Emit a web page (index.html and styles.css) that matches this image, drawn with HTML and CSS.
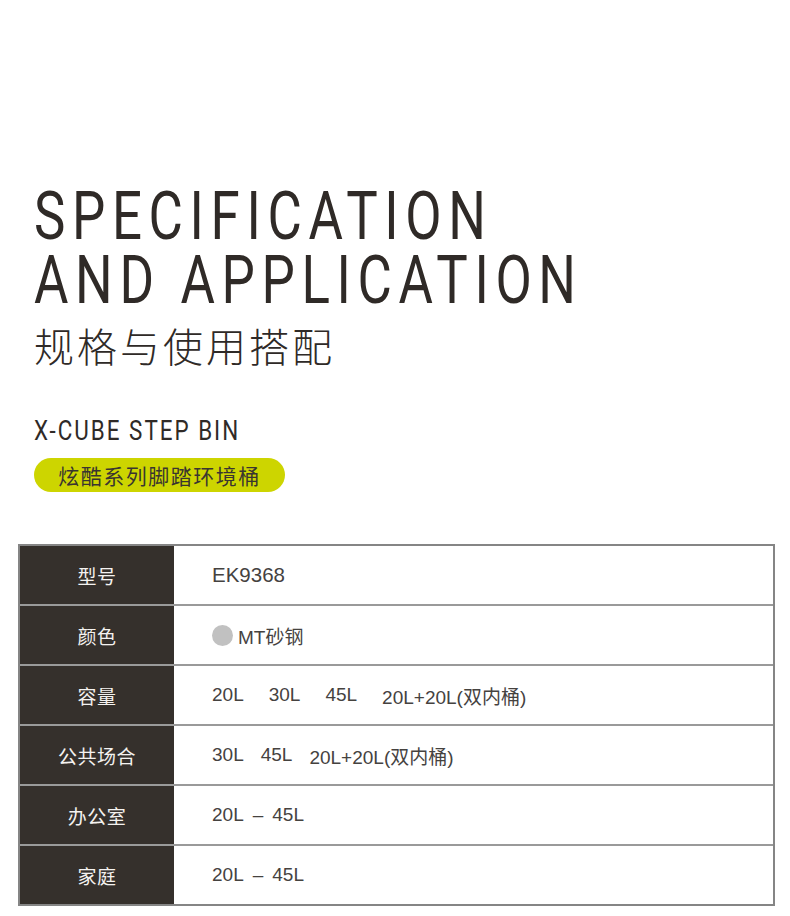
FILE: index.html
```html
<!DOCTYPE html>
<html lang="zh-CN">
<head>
<meta charset="utf-8">
<title>Specification and Application</title>
<link rel="stylesheet" href="styles.css">
</head>
<body>
<main class="page">
  <header class="intro">
    <h1 class="title">
      <span class="title-line">SPECIFICATION</span>
      <span class="title-line">AND APPLICATION</span>
    </h1>
    <h2 class="subtitle">规格与使用搭配</h2>
    <p class="product-en">X-CUBE STEP BIN</p>
    <div class="pill">炫酷系列脚踏环境桶</div>
  </header>

  <section class="spec">
    <div class="row">
      <div class="label">型号</div>
      <div class="value model">EK9368</div>
    </div>
    <div class="row">
      <div class="label">颜色</div>
      <div class="value"><span class="swatch"></span><span>MT砂钢</span></div>
    </div>
    <div class="row">
      <div class="label">容量</div>
      <div class="value wide"><span>20L</span><span>30L</span><span>45L</span><span>20L+20L(双内桶)</span></div>
    </div>
    <div class="row">
      <div class="label">公共场合</div>
      <div class="value mid"><span>30L</span><span>45L</span><span>20L+20L(双内桶)</span></div>
    </div>
    <div class="row">
      <div class="label">办公室</div>
      <div class="value range"><span>20L</span><span>–</span><span>45L</span></div>
    </div>
    <div class="row">
      <div class="label">家庭</div>
      <div class="value range"><span>20L</span><span>–</span><span>45L</span></div>
    </div>
  </section>
</main>
</body>
</html>
```

FILE: styles.css
```css
html, body {
  margin: 0;
  padding: 0;
  background: #ffffff;
}

.page {
  width: 790px;
  padding-top: 185px;
  color: #2f2a27;
}

.intro {
  padding-left: 34px;
}

.title {
  margin: 0;
  font-family: Roboto, "Liberation Sans", sans-serif;
  font-weight: 400;
  font-size: 66px;
  line-height: 64px;
  letter-spacing: 8.3px;
  color: #2f2a27;
}

.title-line {
  display: block;
  white-space: nowrap;
  transform: scaleX(0.8);
  transform-origin: left center;
}

.subtitle {
  margin: 8px 0 0;
  font-family: "Noto Sans CJK SC", sans-serif;
  font-weight: 300;
  font-size: 40px;
  line-height: 48px;
  letter-spacing: 3px;
  color: #2f2a27;
}

.product-en {
  margin: 46px 0 0;
  font-family: Roboto, "Liberation Sans", sans-serif;
  font-weight: 400;
  font-size: 28px;
  line-height: 32px;
  letter-spacing: 2.5px;
  white-space: nowrap;
  transform: scaleX(0.8);
  transform-origin: left center;
  color: #2f2a27;
}

.pill {
  margin-top: 11px;
  width: 251px;
  height: 34px;
  border-radius: 17px;
  background: #cdd500;
  display: flex;
  align-items: center;
  justify-content: center;
  font-family: "Noto Sans CJK SC", sans-serif;
  font-size: 21px;
  letter-spacing: 1.5px;
  color: #3a3530;
}

.spec {
  margin: 52px 0 0 18px;
  width: 757px;
  box-sizing: border-box;
  border: 2px solid #858585;
}

.row {
  display: grid;
  grid-template-columns: 154px 1fr;
  height: 60px;
  box-sizing: border-box;
  border-bottom: 2px solid #9a9a9a;
}

.row:last-child {
  height: 58px;
  border-bottom: none;
}

.label {
  background: #35302c;
  color: #f4f2f0;
  display: flex;
  align-items: center;
  justify-content: center;
  font-family: "Noto Sans CJK SC", sans-serif;
  font-size: 19px;
  letter-spacing: 0.5px;
}

.value {
  display: flex;
  align-items: center;
  padding-left: 38px;
  font-family: "Liberation Sans", Arial, "Noto Sans CJK SC", sans-serif;
  font-size: 19px;
  color: #45423f;
}

.model {
  font-size: 20.5px;
}

.swatch {
  width: 21px;
  height: 21px;
  border-radius: 50%;
  background: #c1c1c1;
  margin-right: 5px;
}

.wide {
  gap: 25px;
}

.mid {
  gap: 17px;
}

.range {
  gap: 9px;
}
```
